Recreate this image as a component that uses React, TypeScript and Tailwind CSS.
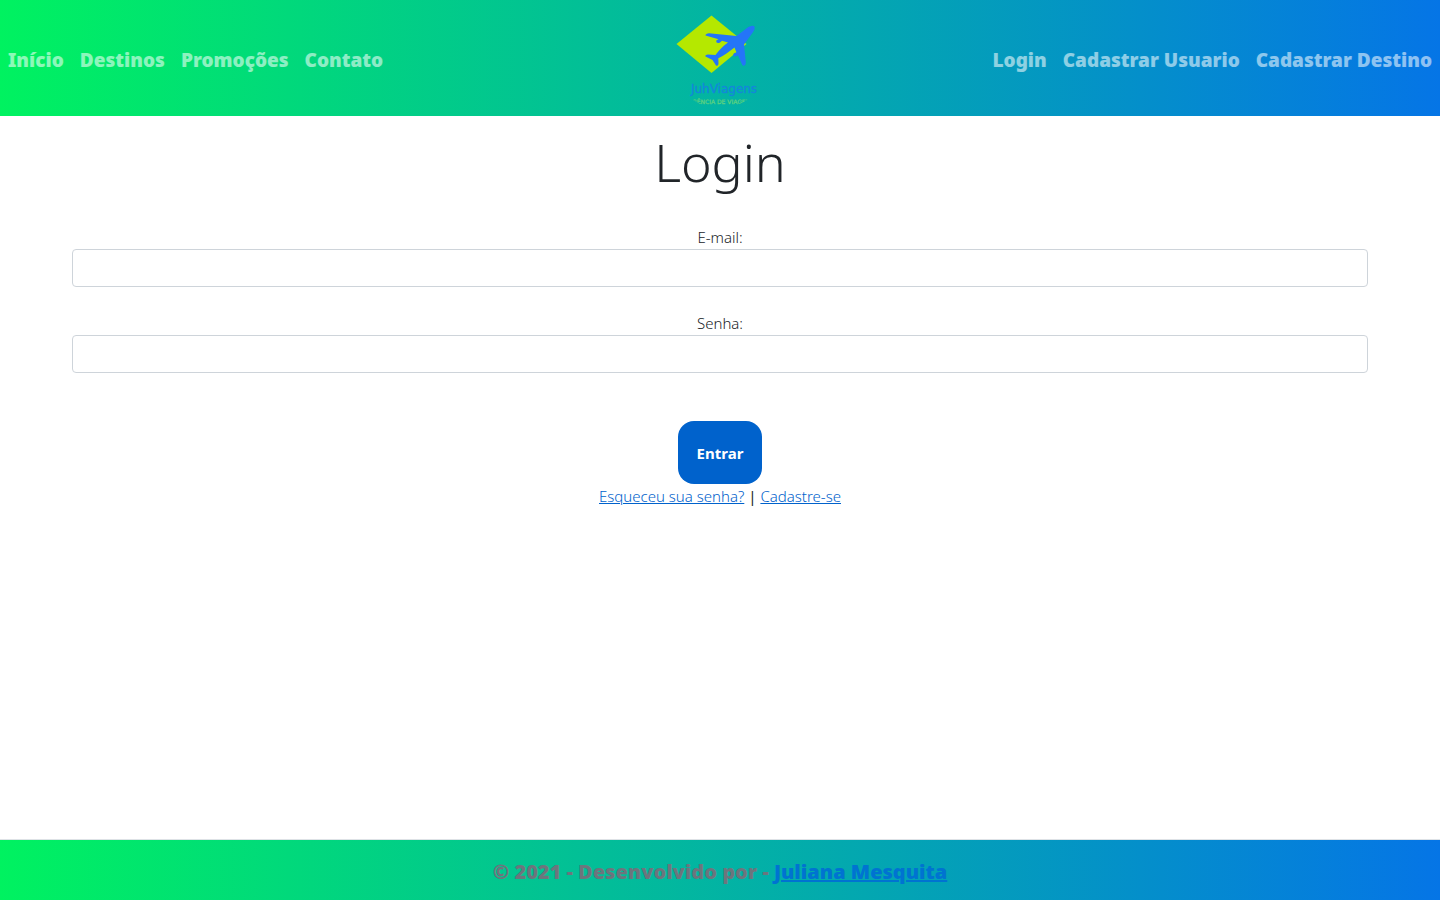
import React from 'react';

const leftLinks = ['Início', 'Destinos', 'Promoções', 'Contato'];
const rightLinks = ['Login', 'Cadastrar Usuario', 'Cadastrar Destino'];

function Logo() {
  return (
    <svg viewBox="0 0 100 100" className="size-[100px]" role="img" aria-label="JuhViagens">
      <defs>
        <clipPath id="logo-circle">
          <circle cx="50" cy="50" r="50" />
        </clipPath>
      </defs>
      <g clipPath="url(#logo-circle)">
        <path d="M6.5 36 41.500 7.500 76.500 36 41.500 65Z" fill="#b5e800" />
        <path
          d="M84.300 18.300C82.500 17 79.500 18.200 77 20L66.500 28 39 25.300C37 25.300 35.500 26.300 35.500 27.500L48.500 31.200 46.500 32.200C45.500 34.500 47.500 35.800 50 34.500L52 32.800 58 34.500C53 38 48.500 42.500 45.500 47L38 46.500C36 46.600 34.800 47.800 35.500 48.500L42.500 52 46 57.500C47.500 58.200 48.500 57.500 48.500 55L48.300 50.300C54 47.500 60 43 64.500 39.500L66.500 44.500 64.500 45C62.500 46.200 63 48.500 65 48.500L68 47.500 72.300 57C74 58.800 76 57 75.800 54L74 36.500 82 25.500C84 23 85.500 20.300 84.300 18.300Z"
          fill="#2475f8"
        />
        <text x="54" y="85" textAnchor="middle" fontSize="12" stroke="#1486dc" strokeWidth="0.3" fill="#1486dc" className="font-['DejaVu_Sans',sans-serif] font-normal">JuhViagens</text>
        <text x="51" y="96" textAnchor="middle" fontSize="6" stroke="#5bd080" strokeWidth="0.3" fill="#5bd080" className="font-['DejaVu_Sans',sans-serif] font-normal">AGÊNCIA DE VIAGENS</text>
      </g>
    </svg>
  );
}

function NavLinks({ links, label }: { links: string[]; label: string }) {
  return (
    <nav aria-label={label}>
      <ul className="flex">
        {links.map((link) => (
          <li key={link}>
            <a href="#" className="block px-2 pt-2 pb-1 whitespace-nowrap text-white/55">{link}</a>
          </li>
        ))}
      </ul>
    </nav>
  );
}

function Field({ id, label, type }: { id: string; label: string; type: string }) {
  return (
    <div className="flex flex-col">
      <label htmlFor={id} className="text-center">{label}</label>
      <input id={id} type={type} className="h-[38px] w-full rounded border border-[#ced4da] bg-white px-3" />
    </div>
  );
}

export default function App() {
  return (
    <div className="flex min-h-screen flex-col bg-white font-['Noto_Sans','Open_Sans',sans-serif] text-base font-light text-[#212529]">
      <header className="grid grid-cols-[1fr_auto_1fr] items-center bg-linear-to-r/srgb from-[#00f260] to-[#0575e6] py-2 text-[19px] leading-7 font-black">
        <NavLinks links={leftLinks} label="Principal" />
        <Logo />
        <div className="flex justify-end">
          <NavLinks links={rightLinks} label="Conta" />
        </div>
      </header>

      <main className="flex flex-1 flex-col px-[72px] pt-3">
        <h1 className="text-center text-[52px] leading-[68px]">Login</h1>
        <form className="flex flex-col items-stretch pt-[29px] text-[15px] leading-6" onSubmit={(e) => e.preventDefault()}>
          <div className="flex flex-col gap-6">
            <Field id="email" label="E-mail:" type="email" />
            <Field id="senha" label="Senha:" type="password" />
          </div>
          <button type="submit" className="mt-12 h-[63px] self-center rounded-2xl bg-[#0062cc] px-[19px] font-bold text-white">Entrar</button>
        </form>
        <p className="text-center text-[15px] leading-6">
          <a href="#" className="text-[#0062cc] underline">Esqueceu sua senha?</a>
          <span className="font-normal">{' | '}</span>
          <a href="#" className="text-[#0062cc] underline">Cadastre-se</a>
        </p>
      </main>

      <footer className="border-t border-[#dee2e6] bg-linear-to-r/srgb from-[#00f260] to-[#0575e6] px-4 pt-[18px] pb-[14px] text-center text-xl leading-7 font-black text-[#6c757d]">
        © 2021 - Desenvolvido por - <a href="#" className="text-[#0073d1] underline">Juliana Mesquita</a>
      </footer>
    </div>
  );
}
